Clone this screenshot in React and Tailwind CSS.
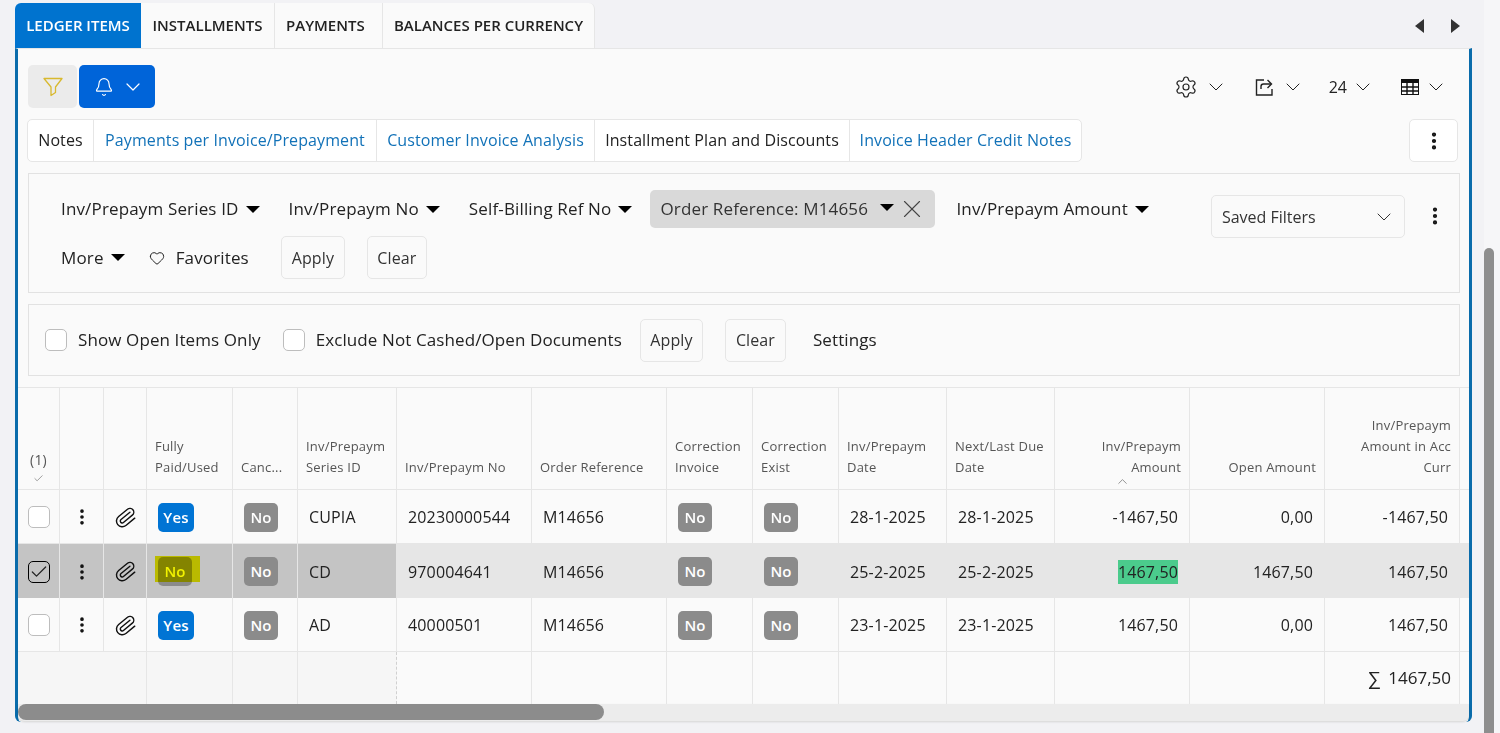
import { Bell, ChevronDown, ChevronUp, Check, EllipsisVertical, Heart, Paperclip, Settings, X } from "lucide-react";

const GRID = "grid grid-cols-[42px_44px_43px_86px_65px_99px_135px_135px_86px_86px_108px_108px_135px_135px_135px_11px]";

function Caret({ className = "ml-[7px]" }) {
  return <span className={`inline-block mb-[3px] w-0 h-0 border-x-[7px] border-x-transparent border-t-[7px] border-t-black align-middle ${className}`} />;
}

function Down({ className = "" }) {
  return <ChevronDown size={24} strokeWidth={1} className={className} />;
}

function FunnelIcon() {
  return (
    <svg width="20" height="20" viewBox="0 0 20 20" fill="none" stroke="#d8b92f" strokeWidth="1.3" strokeLinejoin="round">
      <path d="M1 1.5h18l-6.5 8.5v5.5L8 18.5V10z" />
    </svg>
  );
}

function ShareIcon() {
  return (
    <svg width="18" height="18" viewBox="0 0 18 18" fill="none" stroke="#222" strokeWidth="1.4">
      <path d="M9 2H1.5v15H17v-6" />
      <path d="M6 11V8.5C6 7 7 6 8.5 6H16" />
      <path d="M12.5 2 16.5 6l-4 4" />
    </svg>
  );
}

function TableIcon() {
  return (
    <svg width="18" height="16" viewBox="0 0 18 16">
      <rect x="0.5" y="0.5" width="17" height="15" fill="none" stroke="#111" />
      <rect x="0.5" y="0.5" width="17" height="3.5" fill="#111" />
      <path d="M6 4v11M12 4v11M1 8h16M1 12h16" stroke="#111" strokeWidth="1.4" />
    </svg>
  );
}

function Badge({ yes, mark }) {
  return (
    <span className={`relative inline-flex items-center justify-center h-[29px] rounded-[5px] text-white font-semibold text-[15px] ${yes ? "w-9 bg-[#0074d4]" : "w-[34px] bg-[#8b8b8b]"}`}>
      {yes ? "Yes" : "No"}
      {mark && <span className="absolute -left-[3px] top-[-1px] w-[45px] h-[26px] bg-[#f2f200] mix-blend-multiply" />}
    </span>
  );
}

function Box({ checked }) {
  return (
    <span className={`flex items-center justify-center w-[22px] h-[22px] rounded-[5px] border ${checked ? "border-black" : "border-[#bdbdbd] bg-white"}`}>
      {checked && <Check size={20} strokeWidth={1.5} />}
    </span>
  );
}

function Head({ className = "", children }) {
  return (
    <div className={`flex flex-col justify-end border-r border-[#e6e6e6] px-2 pb-[11px] text-[13px] leading-[21px] text-[#555] tracking-[0.2px] ${className}`}>
      {children}
    </div>
  );
}

function Cell({ className = "", children, right }) {
  return (
    <div className={`flex items-center pt-px border-r border-[#e6e6e6] text-[16px] tracking-[0.15px] text-[#222] ${right ? "justify-end pr-[11px]" : "pl-[11px]"} ${className}`}>
      {children}
    </div>
  );
}

function Row({ sel, yes, series, no, date, amount, open, acc }) {
  const dark = sel ? "bg-[#c4c4c4]" : "";
  return (
    <div className={`${GRID} h-[54px] border-b border-[#e6e6e6] ${sel ? "bg-[#e6e6e6] border-b-0" : ""}`}>
      <Cell className={`justify-center !pl-0 ${dark}`}><Box checked={sel} /></Cell>
      <Cell className={`justify-center !pl-0 ${dark}`}><EllipsisVertical size={20} strokeWidth={2.4} color="#111" /></Cell>
      <Cell className={`justify-center !pl-0 ${dark}`}><Paperclip size={23} strokeWidth={1.5} color="#111" className="rotate-[6deg]" /></Cell>
      <Cell className={dark}><Badge yes={yes} mark={sel} /></Cell>
      <Cell className={dark}><Badge /></Cell>
      <Cell className={dark}>{series}</Cell>
      <Cell>{no}</Cell>
      <Cell>M14656</Cell>
      <Cell><Badge /></Cell>
      <Cell><Badge /></Cell>
      <Cell>{date}</Cell>
      <Cell>{date}</Cell>
      <Cell right><span className={sel ? "bg-[#4bcb8c]" : ""}>{amount}</span></Cell>
      <Cell right>{open}</Cell>
      <Cell right>{acc}</Cell>
      <div className="border-0" />
    </div>
  );
}

export default function App() {
  const panel = "border border-[#e2e2e2] bg-[#fafafa]";
  const btn = "flex items-center justify-center border border-[#e6e6e6] rounded-[5px] text-[16px] text-[#333]";
  return (
    <div className="flex h-[733px] overflow-hidden bg-[#f2f2f5] font-['Open_Sans',sans-serif] text-[#222]">
      <div className="w-[1457px] ml-[15px] flex flex-col">
        {/* tabs */}
        <div className="flex items-end h-[48px] pt-[3px] text-[15px] font-semibold">
          <div className="flex h-full">
            <div className="w-[126px] flex items-center justify-center bg-[#0073cf] text-white rounded-tl-[6px]">LEDGER ITEMS</div>
            <div className="w-[134px] flex items-center justify-center bg-[#fafafa] border-r border-[#e6e6e6]">INSTALLMENTS</div>
            <div className="w-[108px] flex items-center pl-[11px] bg-[#fafafa] border-r border-[#e6e6e6]">PAYMENTS</div>
            <div className="w-[212px] flex items-center justify-center bg-[#fafafa] border-r border-[#e6e6e6] rounded-tr-[6px]">BALANCES PER CURRENCY</div>
          </div>
          <div className="ml-auto mr-[12px] flex gap-[27px] h-full items-center">
            <span className="w-0 h-0 border-y-[7px] border-y-transparent border-r-[9px] border-r-[#333]" />
            <span className="w-0 h-0 border-y-[7px] border-y-transparent border-l-[9px] border-l-[#333]" />
          </div>
        </div>

        {/* panel */}
        <div className="flex-1 flex flex-col bg-[#fafafa] border-x-[3px] border-x-[#0a6cab] border-t border-t-[#e6e6e6] rounded-b-[6px] mb-[11px] min-h-0">
          <div className="pl-[10px] pr-[9px]">
            <div className="flex items-center mt-4 h-[43px]">
              <div className="w-[49px] h-full flex items-center justify-center bg-[#ebebeb] rounded-[5px]">
                <FunnelIcon />
              </div>
              <div className="ml-[2px] w-[76px] h-full flex items-center pl-[15px] gap-[7px] bg-[#0064d9] rounded-[5px] text-white">
                <Bell size={20} strokeWidth={1.4} />
                <ChevronDown size={24} strokeWidth={1.2} />
              </div>
              <div className="ml-auto flex items-center text-[16px] pr-[12px]">
                <Settings size={24} strokeWidth={1.2} />
                <Down className="ml-[6px]" />
                <span className="ml-[27px]"><ShareIcon /></span>
                <Down className="ml-2" />
                <span className="ml-6">24</span>
                <Down className="ml-1" />
                <span className="ml-[26px]"><TableIcon /></span>
                <Down className="ml-[5px]" />
              </div>
            </div>

            <div className="flex items-center justify-between mt-[11px] h-[43px] text-[16px] tracking-[0.1px]">
              <div className="flex h-full -ml-px border border-[#e6e6e6] rounded-[5px] bg-white">
                <div className="w-[66px] pb-[2px] flex items-center justify-center border-r border-[#e6e6e6]">Notes</div>
                <div className="w-[283px] pb-[2px] flex items-center justify-center border-r border-[#e6e6e6] text-[#1272b8]">Payments per Invoice/Prepayment</div>
                <div className="w-[218px] pb-[2px] flex items-center justify-center border-r border-[#e6e6e6] text-[#1272b8]">Customer Invoice Analysis</div>
                <div className="w-[255px] pb-[2px] flex items-center justify-center border-r border-[#e6e6e6]">Installment Plan and Discounts</div>
                <div className="w-[231px] pb-[2px] flex items-center justify-center text-[#1272b8]">Invoice Header Credit Notes</div>
              </div>
              <div className="w-[49px] h-full mr-[2px] flex items-center justify-center bg-white border border-[#e6e6e6] rounded-[5px]">
                <EllipsisVertical size={22} strokeWidth={2.6} color="#111" />
              </div>
            </div>

            {/* filters */}
            <div className={`${panel} mt-[11px] h-[120px] pl-[32px] text-[17px] tracking-[0.15px]`}>
              <div className="flex items-center h-[38px] mt-4">
                <span>Inv/Prepaym Series ID<Caret /></span>
                <span className="ml-[29px]">Inv/Prepaym No<Caret /></span>
                <span className="ml-[29px]">Self-Billing Ref No<Caret /></span>
                <span className="ml-[18px] w-[285px] h-full flex items-center pl-[10px] bg-[#d9d9d9] rounded-[5px] text-[#333]">
                  Order Reference: M14656<Caret className="ml-[12px]" />
                  <X size={30} strokeWidth={0.9} className="ml-[3px]" color="#444" />
                </span>
                <span className="ml-[21px]">Inv/Prepaym Amount<Caret /></span>
                <span className="ml-[62px] self-start mt-[5px] w-[194px] h-[43px] shrink-0 flex items-center justify-between pl-[10px] pr-[8px] border border-[#e6e6e6] rounded-[5px] text-[16px] tracking-normal text-[#333]">
                  Saved Filters<Down />
                </span>
                <EllipsisVertical size={22} strokeWidth={2.6} color="#111" className="ml-[19px] self-start mt-[15px] shrink-0" />
              </div>
              <div className="flex items-center mt-2 h-[43px]">
                <span>More<Caret /></span>
                <Heart size={16} strokeWidth={1.5} className="ml-6" />
                <span className="ml-[11px]">Favorites</span>
                <span className={`${btn} ml-8 w-[64px] h-full`}>Apply</span>
                <span className={`${btn} ml-[22px] w-[60px] h-full`}>Clear</span>
              </div>
            </div>

            <div className={`${panel} mt-[11px] h-[72px] flex items-center pl-[16px] text-[17px] tracking-[0.1px]`}>
              <Box />
              <span className="ml-[11px]">Show Open Items Only</span>
              <span className="ml-[22px]"><Box /></span>
              <span className="ml-[11px]">Exclude Not Cashed/Open Documents</span>
              <span className={`${btn} ml-[18px] w-[63px] h-[43px]`}>Apply</span>
              <span className={`${btn} ml-[22px] w-[61px] h-[43px]`}>Clear</span>
              <span className="ml-[27px]">Settings</span>
            </div>
          </div>

          {/* table */}
          <div className="mt-[11px] border-t border-[#e6e6e6]">
            <div className={`${GRID} h-[102px] border-b border-[#e6e6e6]`}>
              <Head className="items-center !px-0 !pb-0 text-[14px]"><span>(1)</span><Check size={11} strokeWidth={1.2} className="mb-[5px] mt-[3px]" /></Head>
              <Head />
              <Head />
              <Head><span>Fully</span><span>Paid/Used</span></Head>
              <Head><span>Canc...</span></Head>
              <Head><span>Inv/Prepaym</span><span>Series ID</span></Head>
              <Head><span>Inv/Prepaym No</span></Head>
              <Head><span>Order Reference</span></Head>
              <Head><span>Correction</span><span>Invoice</span></Head>
              <Head><span>Correction</span><span>Exist</span></Head>
              <Head><span>Inv/Prepaym</span><span>Date</span></Head>
              <Head><span>Next/Last Due</span><span>Date</span></Head>
              <Head className="items-end !pb-0"><span>Inv/Prepaym</span><span>Amount</span><ChevronUp size={15} strokeWidth={1} className="mr-[51px] -mt-[4px]" /></Head>
              <Head className="items-end"><span>Open Amount</span></Head>
              <Head className="items-end"><span>Inv/Prepaym</span><span>Amount in Acc</span><span>Curr</span></Head>
              <div />
            </div>
            <Row yes series="CUPIA" no="20230000544" date="28-1-2025" amount="-1467,50" open="0,00" acc="-1467,50" />
            <Row sel series="CD" no="970004641" date="25-2-2025" amount="1467,50" open="1467,50" acc="1467,50" />
            <Row yes series="AD" no="40000501" date="23-1-2025" amount="1467,50" open="0,00" acc="1467,50" />
            <div className={`${GRID} h-[52px]`}>
              <div className="col-span-3 bg-[#f6f6f6] border-r border-[#e6e6e6]" />
              <div className="bg-[#f6f6f6] border-r border-[#e6e6e6]" />
              <div className="bg-[#f6f6f6] border-r border-[#e6e6e6]" />
              <div className="bg-[#f6f6f6] border-r border-dashed border-[#d0d0d0]" />
              <div className="border-r border-[#e6e6e6]" />
              <div className="border-r border-[#e6e6e6]" />
              <div className="border-r border-[#e6e6e6]" />
              <div className="border-r border-[#e6e6e6]" />
              <div className="border-r border-[#e6e6e6]" />
              <div className="border-r border-[#e6e6e6]" />
              <div className="border-r border-[#e6e6e6]" />
              <div className="border-r border-[#e6e6e6]" />
              <div className="flex items-center justify-end pr-[8px] border-r border-[#e6e6e6] text-[17px]">
                <span className="mr-[7px] text-[19px] font-['DejaVu_Sans',sans-serif] font-light">∑</span>1467,50
              </div>
              <div />
            </div>
            <div className="h-[17px] bg-[#ececec] rounded-b-[6px] shadow-[0_1px_2px_rgba(0,0,0,0.15)]">
              <div className="w-[586px] h-[16px] bg-[#8c8c8c] rounded-full" />
            </div>
          </div>
        </div>
      </div>
      {/* page scrollbar */}
      <div className="ml-[12px] flex-1 flex flex-col justify-end bg-[#f6f6f8]">
        <div className="w-[10px] h-[485px] bg-[#8e8e8e] rounded-t-full" />
      </div>
    </div>
  );
}
